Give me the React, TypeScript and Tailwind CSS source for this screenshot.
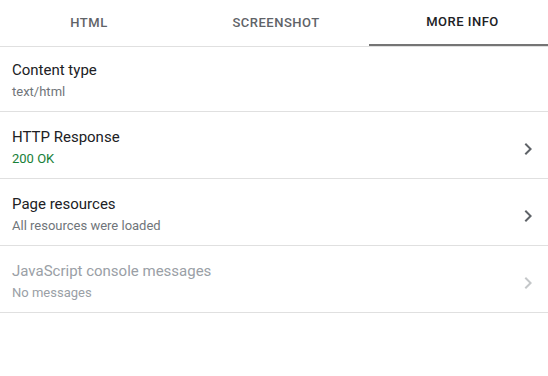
import React from 'react';

type Row = {
  title: string;
  value: string;
  valueClass?: string;
  chevron?: boolean;
  disabled?: boolean;
};

const rows: Row[] = [
  { title: 'Content type', value: 'text/html' },
  { title: 'HTTP Response', value: '200 OK', valueClass: 'text-[#188038]', chevron: true },
  { title: 'Page resources', value: 'All resources were loaded', chevron: true },
  { title: 'JavaScript console messages', value: 'No messages', chevron: true, disabled: true },
];

function Chevron({ disabled }: { disabled?: boolean }) {
  return (
    <svg
      width="24"
      height="24"
      viewBox="0 0 24 24"
      className={disabled ? 'fill-[#c4c7c9]' : 'fill-[#5f6368]'}
    >
      <path d="M10 6L8.59 7.41 13.17 12l-4.58 4.59L10 18l6-6z" />
    </svg>
  );
}

const tabs = [
  { label: 'HTML', cls: 'w-[178px]' },
  { label: 'Screenshot', cls: 'w-[191px] pl-[5px]' },
  { label: 'More info', cls: 'flex-1 pl-[8px]' },
];

export default function App() {
  const active = 2;

  return (
    <div className="w-[548px] h-[376px] bg-white font-['Roboto',sans-serif] overflow-hidden">
      {/* Tabs */}
      <div className="flex h-[47px] border-b border-[#e0e0e0]">
        {tabs.map((t, i) => (
          <div
            key={t.label}
            className={`${t.cls} flex items-center justify-center uppercase text-[13px] font-medium tracking-[0.5px] ${
              i === active
                ? 'text-[#202124] border-b-2 border-[#757575]'
                : 'text-[#5f6368]'
            }`}
          >
            {t.label}
          </div>
        ))}
      </div>

      {/* Info rows */}
      {rows.map((r, i) => (
        <div
          key={r.title}
          className={`flex items-start pl-3 pr-2 border-b border-[#e0e0e0] ${
            i === 0 ? 'h-[65px] pt-[13px]' : 'h-[67px] pt-[15px]'
          }`}
        >
          <div className="flex-1 flex items-center">
            <div className="flex-1">
              <div
                className={`text-[15px] leading-[20px] ${
                  r.disabled ? 'text-[#9aa0a6]' : 'text-[#202124]'
                }`}
              >
                {r.title}
              </div>
              <div
                className={`mt-px text-[13px] leading-[22px] ${
                  r.valueClass ?? (r.disabled ? 'text-[#9aa0a6]' : 'text-[#70757a]')
                }`}
              >
                {r.value}
              </div>
            </div>
            {r.chevron && <Chevron disabled={r.disabled} />}
          </div>
        </div>
      ))}
    </div>
  );
}
